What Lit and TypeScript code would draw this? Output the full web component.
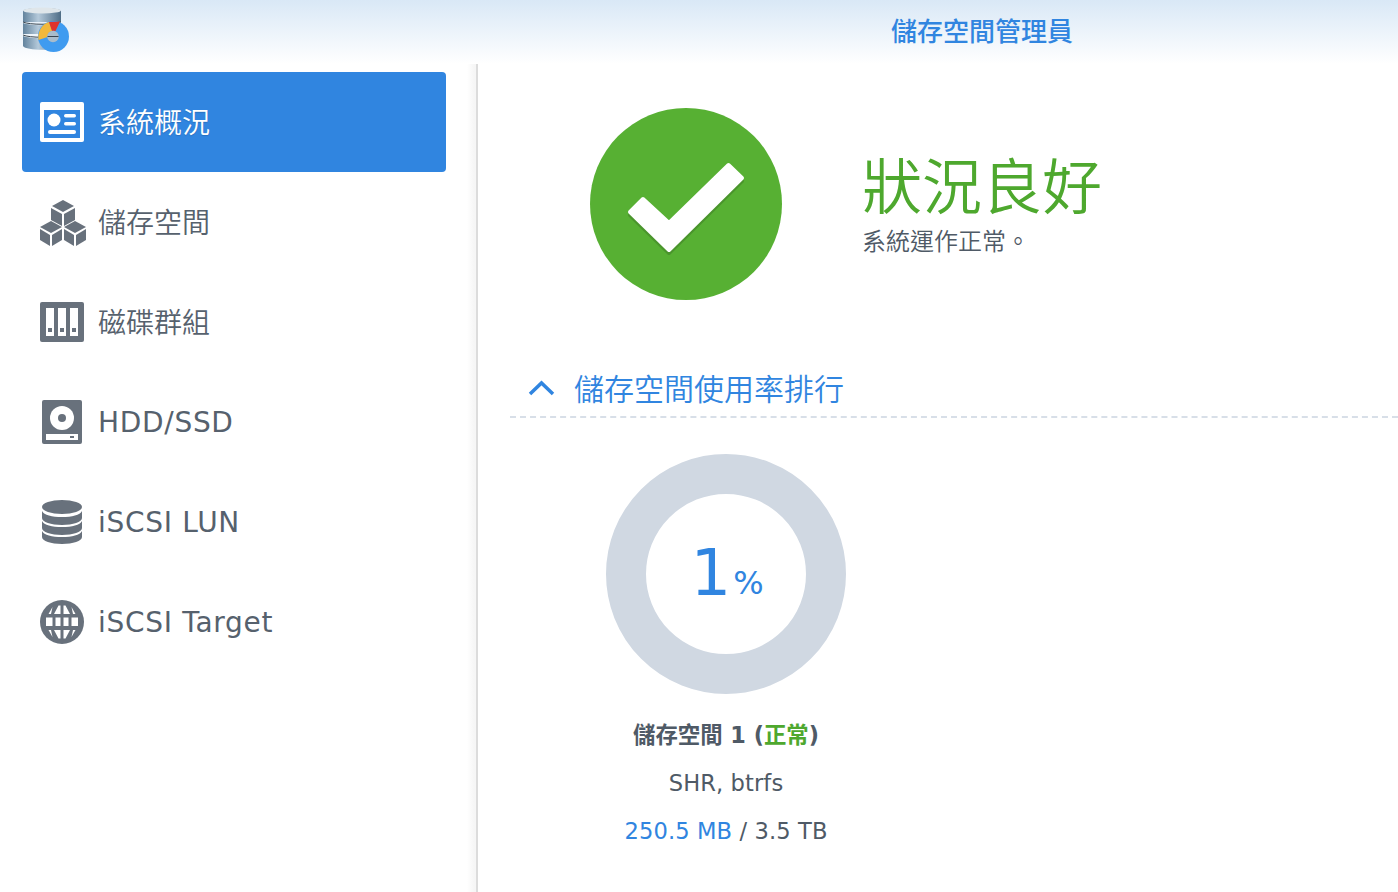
import { LitElement, html, css, svg } from "lit";
import { customElement } from "lit/decorators.js";

const icons: Record<string, unknown> = {
  overview: svg`<svg width="44" height="40" viewBox="0 0 44 40"><rect width="44" height="40" rx="2" fill="#fff"/><rect x="4" y="8" width="36" height="28" fill="#3085e0"/><circle cx="14" cy="18" r="6.500" fill="#fff"/><rect x="24" y="12" width="12" height="3.500" rx="1.700" fill="#fff"/><rect x="24" y="20" width="12" height="3.500" rx="1.700" fill="#fff"/><rect x="8" y="28" width="28" height="4" rx="2" fill="#fff"/></svg>`,
  cubes: svg`<svg class="cubes" width="46" height="46" viewBox="0 0 46 46"><g fill="#68717c"><path d="M23 0l11 6-11 6-11-6z"/><path d="M11 8l11 6v12l-11-6z"/><path d="M35 8v12l-11 6V14z"/><path d="M11 21l11 6-11 6L0 27z"/><path d="M0 29l10 6v11L0 40z"/><path d="M22 29v11l-10 6V35z"/><path d="M35 21l11 6-11 6-11-6z"/><path d="M24 29l10 6v11l-10-6z"/><path d="M46 29v11l-10 6V35z"/></g></svg>`,
  raid: svg`<svg width="44" height="40" viewBox="0 0 44 40"><rect width="44" height="40" rx="2" fill="#68717c"/><g fill="#fff"><rect x="6" y="6" width="8" height="28"/><rect x="18" y="6" width="8" height="28"/><rect x="30" y="6" width="8" height="28"/></g><g fill="#68717c"><rect x="8" y="26" width="4" height="4"/><rect x="20" y="26" width="4" height="4"/><rect x="32" y="26" width="4" height="4"/></g></svg>`,
  hdd: svg`<svg width="40" height="44" viewBox="0 0 40 44"><rect width="40" height="44" rx="2" fill="#68717c"/><circle cx="20" cy="18" r="12" fill="#fff"/><circle cx="20" cy="18" r="4" fill="#68717c"/><rect x="4" y="34" width="32" height="6" fill="#fff"/><rect x="28" y="36" width="4" height="2" fill="#68717c"/></svg>`,
  db: svg`<svg width="40" height="44" viewBox="0 0 40 44"><g fill="#68717c"><ellipse cx="20" cy="7" rx="20" ry="7"/><path d="M0 11c2 4 10 6 20 6s18-2 20-6v7c0 4-9 7-20 7S0 22 0 18z"/><path d="M0 21c2 4 10 6 20 6s18-2 20-6v7c0 4-9 7-20 7S0 32 0 28z"/><path d="M0 31c2 4 10 6 20 6s18-2 20-6v6c0 4-9 7-20 7S0 41 0 37z"/></g></svg>`,
  globe: svg`<svg width="44" height="44" viewBox="0 0 44 44"><circle cx="22" cy="22" r="22" fill="#68717c"/><g fill="#fff"><path d="M12.500 7L8.500 14h2.500zM18.500 5.500L14 14h6.500V5.500zM25.500 5.500L30 14h-6.500V5.500zM31.500 7l4 7H33z"/><path d="M6 17.500h6.500v8.500H6zM15.500 17.500h5v8.500h-5zM23.500 17.500h5v8.500h-5zM31.500 17.500H38v8.500h-6.500z"/><path d="M12.500 37L8.500 30h2.500zM18.500 38.500L14 30h6.500v8.500zM25.500 38.500L30 30h-6.500v8.500zM31.500 37l4-7H33z"/></g></svg>`,
};

const nav = [
  { id: "overview", label: "系統概況", cjk: true, active: true },
  { id: "cubes", label: "儲存空間", cjk: true },
  { id: "raid", label: "磁碟群組", cjk: true },
  { id: "hdd", label: "HDD/SSD" },
  { id: "db", label: "iSCSI LUN" },
  { id: "globe", label: "iSCSI Target" },
];

@customElement("app-root")
export class AppRoot extends LitElement {
  static styles = css`
    :host {
      display: block;
      width: 1398px;
      height: 892px;
      overflow: hidden;
      background: #fff;
      font-family: "DejaVu Sans", "Noto Sans CJK TC", sans-serif;
      color: #4f5a66;
    }
    .header {
      height: 64px;
      display: flex;
      align-items: center;
      background: linear-gradient(#d9e8f6, #ffffff);
      position: relative;
    }
    .logo {
      position: absolute;
      left: 22px;
      top: 7px;
    }
    .title {
      flex: 1;
      text-align: center;
      padding-left: 566px;
      font-size: 26px;
      line-height: 62px;
      font-weight: 500;
      color: #3085e0;
    }
    .body {
      display: flex;
      height: 828px;
    }
    .side {
      flex: none;
      width: 424px;
      padding: 8px 30px 0 22px;
      border-right: 2px solid #dcdcdc;
      background: linear-gradient(to right, #fff 467px, #f6f6f6 474px);
    }
    .item {
      height: 100px;
      display: flex;
      align-items: center;
      border-radius: 4px;
      font-size: 28px;
      color: #56616d;
    }
    .item.active {
      background: #3085e0;
      color: #fff;
      text-shadow: 0 1px 1px rgba(0, 0, 0, 0.15);
    }
    .label {
      letter-spacing: 0.7px;
    }
    .label.cjk {
      letter-spacing: 0;
      font-weight: 350;
      margin-bottom: 2px;
    }
    .ic {
      width: 76px;
      padding-left: 18px;
      box-sizing: border-box;
      flex: none;
    }
    .ic-in {
      width: 44px;
      display: flex;
      justify-content: center;
    }
    .ic svg {
      display: block;
      flex: none;
    }
    .ic svg.cubes {
      margin: 2px 0 0 1px;
    }
    .main {
      flex: 1;
      padding-left: 32px;
      min-width: 0;
    }
    .status {
      display: flex;
      align-items: center;
      padding: 44px 0 0 80px;
    }
    .badge {
      display: block;
      flex: none;
    }
    .st-text {
      margin-left: 80px;
      margin-top: 3px;
    }
    .st-head {
      font-size: 60px;
      line-height: 72px;
      font-weight: 350;
      color: #4ea82e;
    }
    .st-sub {
      font-size: 24px;
      line-height: 36px;
      font-weight: 350;
      color: #4f5a66;
    }
    .section {
      margin-top: 60px;
      height: 58px;
      border-bottom: 2px dashed #d8dfe8;
      display: flex;
      align-items: center;
      padding-left: 18px;
      box-sizing: border-box;
      font-size: 30px;
      font-weight: 350;
      color: #3085e0;
    }
    .section svg {
      margin-right: 19px;
      display: block;
    }
    .section span {
      margin-bottom: 2px;
    }
    .volume {
      width: 432px;
      padding-top: 36px;
      display: flex;
      flex-direction: column;
      align-items: center;
    }
    .donut {
      width: 240px;
      height: 240px;
      border-radius: 50%;
      box-sizing: border-box;
      border: 40px solid #d0d8e2;
      display: flex;
      align-items: center;
      justify-content: center;
      color: #3085e0;
    }
    .num {
      font-size: 64px;
      line-height: 1;
      margin: 0 0 3px 2px;
    }
    .pct {
      font-size: 32px;
      margin-left: 2px;
      line-height: 1;
      margin-top: 17px;
    }
    .l1 {
      margin-top: 24px;
      font-size: 22.400px;
      line-height: 34px;
      font-weight: 700;
      color: #4f5a66;
    }
    .ok {
      color: #4ea82e;
    }
    .l2 {
      margin-top: 14px;
      font-size: 22.600px;
      letter-spacing: 0.1px;
      line-height: 34px;
    }
    .used {
      color: #3085e0;
    }
  `;

  render() {
    return html`
      <div class="header">
        <svg class="logo" width="48" height="46" viewBox="0 0 48 46">
          <defs>
            <linearGradient id="cyl" x1="0" x2="1" y1="0" y2="0">
              <stop offset="0" stop-color="#62839d" />
              <stop offset="0.4" stop-color="#b4c9da" />
              <stop offset="1" stop-color="#4f6d86" />
            </linearGradient>
          </defs>
          <path d="M1 4c0-4 38-4 38 0v11H1z" fill="url(#cyl)" />
          <ellipse cx="20" cy="3.500" rx="19" ry="3" fill="#dfe6ea" />
          <path d="M1 16c6 3 32 3 38 0v11H1z" fill="url(#cyl)" />
          <path d="M1 29c6 3 32 3 38 0v10c-3 5-35 5-38 0z" fill="url(#cyl)" />
          <path d="M1 15c6 3 32 3 38 0M1 28c6 3 32 3 38 0" stroke="#3a4650" stroke-width="1" fill="none" />
          <circle cx="31.500" cy="29.500" r="15.500" fill="#3f9bf0" />
          <path d="M16.500 33c-1-8 3-16 10.500-18l3.500 9a6 6 0 0 0-5 6z" fill="#f2b83a" />
          <path d="M27 15l11-.500-4.500 9.500a6 6 0 0 0-3.500 0z" fill="#e0332d" />
          <circle cx="31" cy="29.500" r="5.800" fill="#a9bccb" />
          <path d="M25.500 29.500h11" stroke="#39444e" stroke-width="1" />
        </svg>
        <div class="title">儲存空間管理員</div>
      </div>
      <div class="body">
        <div class="side">
          ${nav.map(
            (n) => html`<div class="item ${n.active ? "active" : ""}">
              <span class="ic"><span class="ic-in">${icons[n.id]}</span></span>
              <span class="label ${n.cjk ? "cjk" : ""}">${n.label}</span>
            </div>`
          )}
        </div>
        <div class="main">
          <div class="status">
            <svg class="badge" width="192" height="192" viewBox="0 0 192 192">
              <circle cx="96" cy="96" r="96" fill="#57b033" />
              <path d="M40 104L53 91l26 24 59.500-58L152 70 79 142z" transform="translate(0 3)" fill="#4a952c" stroke="#4a952c" stroke-width="4" stroke-linejoin="round" />
              <path d="M40 104L53 91l26 24 59.500-58L152 70 79 142z" fill="#fff" stroke="#fff" stroke-width="4" stroke-linejoin="round" />
            </svg>
            <div class="st-text">
              <div class="st-head">狀況良好</div>
              <div class="st-sub">系統運作正常。</div>
            </div>
          </div>
          <div class="section">
            <svg width="27" height="16" viewBox="0 0 27 16"><path d="M2 14L13.500 3 25 14" fill="none" stroke="#3085e0" stroke-width="3.500" /></svg>
            <span>儲存空間使用率排行</span>
          </div>
          <div class="volume">
            <div class="donut"><span class="num">1</span><span class="pct">%</span></div>
            <div class="l1">儲存空間 1 (<span class="ok">正常</span>)</div>
            <div class="l2">SHR, btrfs</div>
            <div class="l2"><span class="used">250.5 MB</span> / 3.5 TB</div>
          </div>
        </div>
      </div>
    `;
  }
}
